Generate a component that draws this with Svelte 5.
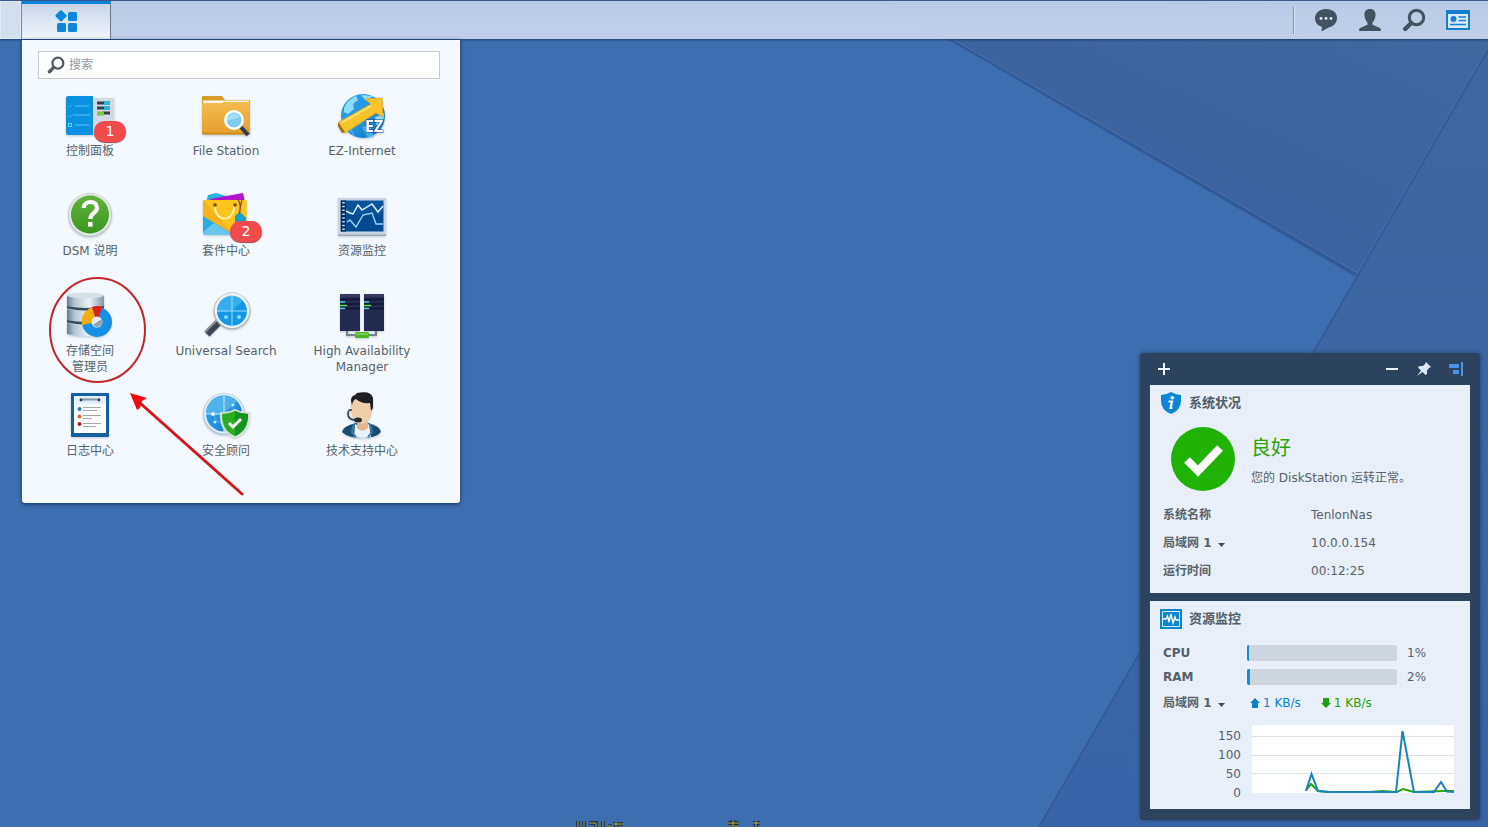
<script>
  const apps = [
    { id: 'panel', label: '控制面板', badge: 1 },
    { id: 'file', label: 'File Station' },
    { id: 'ez', label: 'EZ-Internet' },
    { id: 'help', label: 'DSM 说明' },
    { id: 'package', label: '套件中心', badge: 2 },
    { id: 'resource', label: '资源监控' },
    { id: 'storage', label: '存储空间\n管理员' },
    { id: 'search', label: 'Universal Search' },
    { id: 'ha', label: 'High Availability\nManager' },
    { id: 'log', label: '日志中心' },
    { id: 'security', label: '安全顾问' },
    { id: 'support', label: '技术支持中心' }
  ];
  const meters = [
    { name: 'CPU', value: 1 },
    { name: 'RAM', value: 2 }
  ];
  let query = $state('');
</script>

{#snippet magnifier(size)}
  <svg width={size} height={size} viewBox="0 0 24 24" fill="none" stroke="currentColor" aria-hidden="true">
    <circle cx="14.5" cy="9.5" r="7.2" stroke-width="3" />
    <path d="M9 15.2 3.2 21" stroke-width="4.4" stroke-linecap="round" />
  </svg>
{/snippet}

{#snippet appIcon(id)}
  <svg class="art" viewBox="0 0 48 48" aria-hidden="true">
    {#if id === 'panel'}
      <path d="M26 7h22v35q0 2-2 2H26z" fill="#d3dae1" />
      <path d="M2 5h25v39H2q-2 0-2-2V7q0-2 2-2z" fill="#0a92e2" />
      <path d="M9 15h14M7 24h17M9 34h14" stroke="#5fc0f2" />
      <path d="m2 15 1.500 1.500 3-3M2 25l1.500 1.500 3-3" fill="none" stroke="#44b1ee" />
      <rect x="2.500" y="32.500" width="3" height="3" fill="none" stroke="#5bd5ee" />
      <path d="M31 12h7M31 17h7M37 22h7" stroke="#353f4a" stroke-width="3" />
      <path d="M38 12h6M38 17h6" stroke="#31b4dc" stroke-width="4" />
      <path d="M31 22.500h7" stroke="#75cb37" stroke-width="4" />
    {:else if id === 'file'}
      <path d="M0 6q0-1 1-1h19l3 4h25v14H0z" fill="#d89b29" />
      <path d="M1 9.500h46v8H1z" fill="#fff8e6" />
      <path d="M0 13q0-1 1.500-1H19l3-1h25q1 0 1 1V42q0 1.500-1.500 1.500h-45Q0 43.500 0 42z" fill="url(#folder)" />
      <path d="M0 41.500h48v.500q0 1.500-1.500 1.500h-45Q0 43.500 0 42z" fill="#cf8d20" />
      <path d="m39 36 7 8" stroke="#29404f" stroke-width="4" />
      <circle cx="32" cy="29" r="8.700" fill="#7fcbf3" stroke="#fff" stroke-width="2.500" />
      <path d="M25 30a7 7 0 0 1 13-4z" fill="#a5def9" />
    {:else if id === 'ez'}
      <circle cx="25" cy="25" r="22" fill="url(#globe)" />
      <path d="M6 17q4-9 12-12l2 4-5 4 1 5-6 5-4-2zM23 4l12 1-7 5zM37 26q5-1 9-4 1 8-7 14z" fill="#8edbf5" />
      <path d="M8 34q7 4 9 12M24 36l8-2 4 12-6 1z" fill="#5cc3f0" opacity=".7" />
      <path d="M3 37 1 31 33 13l-6-5 17-1 1 19-7-4L7 42z" fill="#f9c32c" stroke="#e6a51a" stroke-width=".8" />
      <path d="m3 32 30-17" stroke="#ffe06b" stroke-width="2" />
      <path d="m0 31 7 10-3 1-4-7z" fill="#a96812" />
      <text x="27" y="41" class="ez-text">EZ</text>
    {:else if id === 'help'}
      <circle cx="24" cy="24" r="22" fill="#b8c4c0" />
      <circle cx="24" cy="23.500" r="21.300" fill="#dfe6e2" />
      <circle cx="24" cy="23.500" r="19" fill="url(#green)" />
      <path d="M17.500 17q1-6 7-6t6.500 6c0 5-6.700 5-6.700 11" fill="none" stroke="#fff" stroke-width="4.200" />
      <rect x="22" y="31" width="4.600" height="4.600" fill="#fff" />
    {:else if id === 'package'}
      <path d="m6 4 8-2 10 3v8H4z" fill="#23b4df" />
      <path d="m8 8 33-6 2 9H8z" fill="#b513c8" />
      <path d="M1 9h43l1 30q0 5-4 5H6q-5 0-5-5z" fill="#f7b21c" />
      <path d="M1 25 32 44H5q-4 0-4-4z" fill="#29abe4" />
      <path d="M1 41 12 32l20 12H5q-4 0-4-3z" fill="#69c7ef" />
      <path d="m1 9 26 29 18-13V9z" fill="#ffd21c" opacity=".6" />
      <path d="M13 14c-1 18 20 18 19 0" fill="none" stroke="#fff0a8" stroke-width="2" />
      <circle cx="13" cy="14" r="1.800" fill="#7a4700" /><circle cx="33" cy="14" r="1.800" fill="#7a4700" />
      <path d="m33 25 5-4 6 6-1 9H33z" fill="#15a1ca" />
      <path d="M36 8q4 8 1 15M40 8l-3 15" fill="none" stroke="#784b28" stroke-width="1.200" />
    {:else if id === 'resource'}
      <rect x="0" y="7" width="48" height="38" fill="#9eabb9" />
      <rect x="0" y="7" width="48" height="36.500" fill="#cbd5e1" />
      <rect x="2.500" y="9.500" width="43" height="31" fill="#07549c" />
      <path d="M9 24h36v16H9z" fill="#054a90" />
      <path d="M3 9.500h5v31H3z" fill="#082b5c" />
      <path d="M5.500 11v29" stroke="#c9d8e8" stroke-width="2.600" stroke-dasharray="1.500 2.300" />
      <path d="m8 20 4 2 3 1 5-9 4 5 10-6 6 8 5-6" fill="none" stroke="#e4f2ff" stroke-width="1.400" />
      <path d="m9 31 3-2 6 7 7-12 9-2 4 11h7" fill="none" stroke="#98d5fc" stroke-width="1.400" />
    {:else if id === 'storage'}
      <path d="M1 4h37v11q-18 4-37 0zM1 18q18 4 37 0v11q-18 4-37 0zM1 32q18 4 37 0v11q-18 5-37 0z" fill="url(#steel)" />
      <ellipse cx="19.500" cy="4.500" rx="18.500" ry="2.700" fill="#d5e0e8" />
      <path d="M1 15q18 4 37 0v2.500q-18 4-37 0zM1 29q18 4 37 0v2.500q-18 4-37 0z" fill="#354c5e" />
      <circle cx="31" cy="31" r="15" fill="#1590e5" />
      <path d="M31 31 16 34Q14 22 26 16z" fill="#f7ac0c" />
      <path d="m31 31-5-15q5-2 10 0z" fill="#da1e24" />
      <circle cx="31" cy="31" r="5.500" fill="#e4edf5" /><path d="m31 31 5-3q2 6-4 8-3 0-5-2z" fill="#8ea3b4" />
    {:else if id === 'search'}
      <path d="m5 43 14-14" stroke="#3c4650" stroke-width="7" />
      <path d="m3 41 13-13" stroke="#8a949d" stroke-width="2" />
      <circle cx="30" cy="20" r="18.500" fill="#a6b4bf" /><circle cx="30" cy="19.500" r="17.500" fill="#edf2f6" />
      <circle cx="30" cy="20" r="15" fill="#1398e8" />
      <path d="M30 20 41 9.500A15 15 0 0 0 15 21z" fill="#45b7f2" opacity=".7" />
      <path d="M15 20h30M30 5v30" stroke="#a7e5ff" stroke-width=".9" />
      <circle cx="24" cy="26" r="2" fill="#84ddff" /><circle cx="37" cy="26" r="2" fill="#84ddff" />
    {:else if id === 'ha'}
      <path d="M9 38v6h29v-6" fill="none" stroke="#73828a" stroke-width="2" />
      <path d="M2 3h20v37H2zM26 3h20v37H26z" fill="#222a51" />
      <path d="M2 3h20v3H2zM26 3h20v3H26z" fill="#353a63" />
      <path d="M2 8.500h20M2 13h20M2 17.500h20M26 8.500h20M26 13h20M26 17.500h20" stroke="#10152d" stroke-width="1.500" />
      <path d="M2 11h5M26 11h5M2 17.500h5M26 17.500h5" stroke="#4cc6df" stroke-width="1.600" />
      <path d="M2 14.500h7M26 14.500h7" stroke="#62db45" stroke-width="1.600" />
      <rect x="17" y="41" width="14" height="6" rx="1.500" fill="#4db424" />
      <path d="M18 43h12" stroke="#9ae970" />
    {:else if id === 'log'}
      <rect x="5" y="2" width="38" height="44" rx="1" fill="#14609f" />
      <rect x="8" y="5" width="32" height="37" fill="#fff" />
      <path d="M9 5h30v8H9z" fill="#e1eefb" />
      <path d="M15 8.500h18" stroke="#8795a3" stroke-width="2" />
      <circle cx="15" cy="9" r="1.400" fill="#263744" /><circle cx="33" cy="9" r="1.400" fill="#263744" />
      <path d="M17 16.500h18M17 19.500h14M17 24.500h18M17 27.500h9M17 32.500h18M17 35.500h13" stroke="#a0a7ad" />
      <circle cx="13.500" cy="18" r="2" fill="#2277b3" /><circle cx="13.500" cy="25.500" r="2" fill="#e46132" /><circle cx="13.500" cy="33" r="2" fill="#a42422" />
    {:else if id === 'security'}
      <circle cx="22" cy="23" r="21" fill="#b4c5d4" /><circle cx="22" cy="22.500" r="20" fill="#e0edf5" />
      <circle cx="22" cy="22.500" r="18" fill="url(#globe)" />
      <path d="M22 22.500 35 10A18 18 0 0 0 4 23z" fill="#79c8f4" opacity=".5" />
      <path d="M4 23h36M22 5v36" stroke="#c8f2ff" /><circle cx="22" cy="22.500" r="10" fill="none" stroke="#61b8ed" stroke-width=".7" />
      <circle cx="11" cy="23" r="2" fill="#e1fbff" /><circle cx="13" cy="31" r="1.500" fill="#c8f5ff" /><circle cx="31" cy="14" r="1.500" fill="#c8f5ff" />
      <path d="M33 18q7 4 15 3c1 14-4 22-15 26-11-4-16-12-15-26q8 1 15-3z" fill="#d3e2d6" />
      <path d="M33 20q6 3 13 3c0 12-4 18-13 22-9-4-13-10-13-22q7 0 13-3z" fill="#28ad25" />
      <path d="M33 20q6 3 13 3c0 12-4 18-13 22z" fill="#149320" />
      <path d="m27 32 4 4 8-8" fill="none" stroke="#fff" stroke-width="3" />
    {:else}
      <path d="M4 41q1-6 14-9h12q12 3 13 9-5 6-19 6T4 41z" fill="#174c75" />
      <path d="m17 33 7 4 7-4 2 13q-9 2-17 0z" fill="#e8f1f8" />
      <path d="m16 33-2 8 4 5M32 33l2 8-4 5" fill="none" stroke="#427ca4" stroke-width="2" />
      <path d="M19 28h11v9q-6 5-11 0z" fill="#e6b58e" />
      <path d="M13 12q0-8 10-8 11 0 11 12 0 15-10 17-11-2-11-18z" fill="#f1ceaa" />
      <path d="M14 14q-3-8 3-10l2-2q14-3 16 5v10l-2 3-1-8q-9 1-14-4-3 1-4 6z" fill="#201f25" />
      <path d="M14 19q-4-1-4 4 0 6 8 6" fill="none" stroke="#3c454c" stroke-width="1.700" />
      <ellipse cx="20" cy="29" rx="4" ry="2.500" fill="#252b2f" />
    {/if}
  </svg>
{/snippet}

{#snippet network()}
  <span class="pick">
    <select aria-label="网络接口"><option>局域网 1</option></select>
    <svg width="7" height="4" viewBox="0 0 7 4" aria-hidden="true"><path d="M0 0h7L3.500 4z" fill="#424d57" /></svg>
  </span>
{/snippet}

<div class="desktop">
  <svg class="wallpaper" viewBox="0 0 1488 827" preserveAspectRatio="xMaxYMin slice" aria-hidden="true">
    <defs>
      <linearGradient id="facet" x1="0" y1=".8" x2=".8" y2="0"><stop stop-color="#3a60a0" /><stop offset="1" stop-color="#3e699f" /></linearGradient>
      <linearGradient id="side" x1="0" y1="0" x2="0" y2="1"><stop stop-color="#3d689f" /><stop offset="1" stop-color="#3965a8" /></linearGradient>
      <linearGradient id="folder" x1="0" y1="0" x2="0" y2="1"><stop stop-color="#f3bc50" /><stop offset="1" stop-color="#e49f2d" /></linearGradient>
      <linearGradient id="globe" x1="0" y1="0" x2="1" y2="1"><stop stop-color="#2ba5e4" /><stop offset=".5" stop-color="#2395df" /><stop offset="1" stop-color="#0870c7" /></linearGradient>
      <linearGradient id="green" x1="0" y1="0" x2="0" y2="1"><stop stop-color="#61b23a" /><stop offset="1" stop-color="#3b9722" /></linearGradient>
      <linearGradient id="steel"><stop stop-color="#657f92" /><stop offset=".2" stop-color="#b4c5d1" /><stop offset=".6" stop-color="#edf3f7" /><stop offset="1" stop-color="#8197a7" /></linearGradient>
    </defs>
    <rect width="1488" height="827" fill="#3d6eaf" />
    <path d="M885 0h603v50l-130 223z" fill="url(#facet)" />
    <path d="M1488 50v777h-449l319-554z" fill="url(#side)" />
    <path d="m885 0 473 273-2 4L880 0z" fill="#315a98" />
    <path d="m885 0 473 273" stroke="#4874ad" />
    <path d="m1488 50-130 225-319 552" fill="none" stroke="#325c9b" stroke-width="2" />
    <path d="m1486 50-130 225-319 552" fill="none" stroke="#4270ad" />
  </svg>

  <header class="taskbar">
    <span class="edge"></span>
    <button class="launcher" aria-label="主菜单">
      <svg width="24" height="24" viewBox="0 0 24 24" fill="#0c86dc" aria-hidden="true">
        <rect x="2.700" y="2.500" width="8.600" height="8.600" rx="1" transform="rotate(45 7 6.800)" />
        <rect x="14" y="3" width="9" height="9" rx="1.500" /><rect x="3" y="14" width="9" height="9" rx="1.500" /><rect x="14" y="14" width="9" height="9" rx="1.500" />
      </svg>
    </button>
    <nav class="tray" aria-label="系统">
      <button aria-label="通知">
        <svg width="24" height="24" viewBox="0 0 24 24" aria-hidden="true"><path d="M12 1c6.500 0 11 3.700 11 9s-4 8.600-8.500 9.500L7.500 23.500 8 19C3.500 17.500 1 14.500 1 10.500 1 5 5.500 1 12 1z" fill="currentColor" /><circle cx="7" cy="10.500" r="1.400" fill="#e3ebf6" /><circle cx="12" cy="10.500" r="1.400" fill="#e3ebf6" /><circle cx="17" cy="10.500" r="1.400" fill="#e3ebf6" /></svg>
      </button>
      <button aria-label="用户">
        <svg width="24" height="24" viewBox="0 0 24 24" aria-hidden="true"><path d="M12 1c4 0 6 2.500 5.500 6.500-.3 3-1.500 5.500-3 7v2.200L22 20q1 .5 1 3H1q0-2.500 1-3l7.500-3.300v-2.200c-1.500-1.500-2.700-4-3-7C6 3.500 8 1 12 1z" fill="currentColor" /></svg>
      </button>
      <button aria-label="搜索">{@render magnifier(24)}</button>
      <button class="on" aria-label="小组件">
        <svg width="24" height="24" viewBox="0 0 24 24" aria-hidden="true"><path d="M0 2h24v20H0z" fill="currentColor" /><path d="M2 6h20v14H2z" fill="#d9e9f8" /><circle cx="7.500" cy="11" r="3" fill="currentColor" /><path d="M12.500 9H20M12.500 12.500H20M4 16.500h16" stroke="currentColor" stroke-width="1.600" /></svg>
      </button>
    </nav>
  </header>

  <main class="menu">
    <label class="search">
      {@render magnifier(18)}
      <input type="text" placeholder="搜索" aria-label="搜索" bind:value={query} />
    </label>
    <div class="apps">
      {#each apps as app (app.id)}
        <button class="app">
          <span class="icon">
            {@render appIcon(app.id)}
            {#if app.badge}<span class="badge">{app.badge}</span>{/if}
          </span>
          <span class="label">{app.label}</span>
        </button>
      {/each}
    </div>
    <svg class="pointer" width="204" height="230" viewBox="0 0 204 230" fill="none" aria-hidden="true">
      <ellipse cx="55.500" cy="60" rx="47.500" ry="52" stroke="#c5242b" stroke-width="2" />
      <path d="m98 133 102 91" stroke="#d9151b" stroke-width="3" stroke-linecap="round" />
      <path d="m88 123 17 5-5 3-2 7-3 2z" fill="#f0090e" />
    </svg>
  </main>

  <aside class="widgets">
    <div class="tools">
      <button aria-label="添加"><svg width="16" height="16" viewBox="0 0 16 16" aria-hidden="true"><path d="M8 2v12M2 8h12" stroke="#e9f1fa" stroke-width="2" /></svg></button>
      <button class="push" aria-label="最小化"><svg width="16" height="16" viewBox="0 0 16 16" aria-hidden="true"><path d="M2 8h12" stroke="#e9f1fa" stroke-width="2" /></svg></button>
      <button aria-label="固定"><svg width="16" height="16" viewBox="0 0 16 16" aria-hidden="true"><path d="m10 1 5 5-2 1-2 2.500V13l-1.500 1L6.500 11 1 15l4-5.500L2 6.500 3.500 5H7l2-2z" fill="#dce8f5" /></svg></button>
      <button aria-label="靠右"><svg width="16" height="16" viewBox="0 0 16 16" aria-hidden="true"><path d="M1 3h10v4H1zM5 9h6v4H5zM13 1h2v14h-2z" fill="#4b94e5" /></svg></button>
    </div>

    <section class="card">
      <h2>
        <svg width="22" height="22" viewBox="0 0 22 22" aria-hidden="true"><path d="M11 0q5 3 10 3v6q0 9-10 13Q1 18 1 9V3q5 0 10-3z" fill="#0b86d7" /><circle cx="12.300" cy="5.700" r="1.800" fill="#fff" /><path d="M8.500 9.500h3.500l-1.500 6.500h2" fill="none" stroke="#fff" stroke-width="2.200" /></svg>
        系统状况
      </h2>
      <div class="health">
        <svg width="64" height="64" viewBox="0 0 64 64" aria-hidden="true"><circle cx="32" cy="32" r="32" fill="#20b305" /><path d="m16 33 11 11 22-23" fill="none" stroke="#fff" stroke-width="8" /></svg>
        <div><strong>良好</strong><p>您的 DiskStation 运转正常。</p></div>
      </div>
      <table>
        <tbody>
          <tr><th scope="row">系统名称</th><td>TenlonNas</td></tr>
          <tr><th scope="row">{@render network()}</th><td>10.0.0.154</td></tr>
          <tr><th scope="row">运行时间</th><td>00:12:25</td></tr>
        </tbody>
      </table>
    </section>

    <section class="card">
      <h2>
        <svg width="22" height="22" viewBox="0 0 22 22" aria-hidden="true"><path d="M0 1h22v20H0z" fill="#0b86d0" /><path d="M2.500 3.500h17v15h-17z" fill="none" stroke="#d6edfa" /><path d="M3 11h3l1.500-3L9 14l2-8 2 9 2-6 1 3h3" fill="none" stroke="#fff" stroke-width="1.400" /></svg>
        资源监控
      </h2>
      <div class="usage">
        {#each meters as m (m.name)}
          <div class="row">
            <b>{m.name}</b>
            <div class="meter" role="meter" aria-label={m.name} aria-valuenow={m.value} aria-valuemin="0" aria-valuemax="100"><i style="width:{m.value}%"></i></div>
            <span>{m.value}%</span>
          </div>
        {/each}
        <div class="row net">
          <div>{@render network()}</div>
          <div class="rates">
            <span class="up"><svg width="10" height="10" viewBox="0 0 10 10" aria-hidden="true"><path d="m5 0 5 5H8v5H2V5H0z" fill="currentColor" /></svg>1 KB/s</span>
            <span class="down"><svg width="10" height="10" viewBox="0 0 10 10" aria-hidden="true"><path d="m5 10 5-5H8V0H2v5H0z" fill="currentColor" /></svg>1 KB/s</span>
          </div>
        </div>
        <div class="chart">
          <div class="axis"><span>150</span><span>100</span><span>50</span><span>0</span></div>
          <svg viewBox="0 0 202 68" preserveAspectRatio="none" role="img" aria-label="网络流量">
            <path d="M0 0h202v68H0z" fill="#fff" />
            <path d="M0 11.500h202M0 30.500h202M0 48.500h202" stroke="#dfe2e5" />
            <path d="m54 65 5-6 7 7 10 1h42l12-1 15 1 6-3 11 3 30-1h10" fill="none" stroke="#25a40d" stroke-width="2" />
            <path d="m54 66 5.500-17 6.500 17 12 1h66l6.500-61 11.500 61h20l7-10 6 9.500 7 .500" fill="none" stroke="#1a82bb" stroke-width="2" />
          </svg>
        </div>
      </div>
    </section>
  </aside>

  <svg class="marks" width="186" height="7" viewBox="0 0 186 7" fill="none" aria-hidden="true">
    <path d="M2 1v6M8 1v6M13 3h7v4M27 1v6M32 6h4M40 2v5M37 4h10M152 3h11M157 0v5M154 6h8M177 3h7M180 1v6" stroke="#132a30" stroke-width="3.500" />
    <path d="M2 1v6M8 1v6M13 3h7v4M27 1v6M32 6h4M40 2v5M37 4h10M152 3h11M157 0v5M154 6h8M177 3h7M180 1v6" stroke="#b7b95b" />
  </svg>
</div>

<style>
  :global(body) { margin: 0; }
  .desktop {
    position: relative; min-height: 100vh; overflow: hidden; box-sizing: border-box;
    background: #3d6eaf; color: #56616c;
    font: 12px/16px "DejaVu Sans", "Noto Sans CJK SC", sans-serif;
  }
  .desktop :is(button, input, select) { font: inherit; color: inherit; border: 0; background: none; padding: 0; margin: 0; }
  svg { display: block; flex: none; }
  .wallpaper { position: absolute; inset: 0; width: 100%; height: 100%; }

  .taskbar {
    position: relative; display: flex; height: 39px; box-sizing: border-box;
    border-top: 1px solid #3b578c; background: linear-gradient(#c0d0e9f2, #c8d4eaf2);
    box-shadow: 0 1px 2px #1d3d6b;
  }
  .edge { width: 21px; background: #d3dfef; box-shadow: inset 0 0 0 1px #e1ebf7; border-right: 1px solid #7189ad; }
  .desktop .launcher {
    display: grid; place-items: center; width: 89px; box-sizing: border-box; padding-bottom: 2px;
    border-top: 3px solid #0b83d9; border-right: 1px solid #68788f;
    background: linear-gradient(#c9d5e7, #f1f6fd);
  }
  .tray { display: flex; align-items: center; margin-left: auto; padding-right: 8px; color: #43525f; }
  .tray::before { content: ""; width: 1px; height: 27px; margin-right: 10px; background: #7f91ad; box-shadow: 1px 0 #dce7f5; }
  .tray button { display: grid; place-items: center; width: 44px; height: 38px; }
  .tray .on { color: #147fd0; }

  .menu {
    position: absolute; top: 40px; left: 22px; width: 438px; height: 463px; box-sizing: border-box;
    padding-top: 11px; border-radius: 0 0 3px 3px; background: #f4f9ff; box-shadow: 0 1px 4px #14305c;
  }
  .search {
    display: flex; align-items: center; gap: 4px; height: 28px; box-sizing: border-box; margin: 0 20px 0 16px;
    padding-left: 8px; border: 1px solid #c5cbd1; background: #fff; color: #4f5860;
  }
  .search input { flex: 1; min-width: 0; outline: 0; }
  .search input::placeholder { color: #929aa1; opacity: 1; }
  .apps { display: grid; grid-template-columns: repeat(3, 136px); grid-auto-rows: 100px; margin-top: 12px; }
  .app { display: flex; flex-direction: column; align-items: center; gap: 4px; }
  .icon { position: relative; width: 48px; height: 48px; }
  .art { width: 48px; height: 48px; overflow: visible; filter: drop-shadow(0 1px 1px #33445544); }
  .ez-text { font: bold 16px "Open Sans", sans-serif; fill: #fff; stroke: #174a8e; stroke-width: 1px; paint-order: stroke; }
  .badge {
    position: absolute; left: 28px; top: 30px; width: 32px; height: 21px; border-radius: 11px;
    background: #f24b4b; color: #fff; font-size: 14px; line-height: 20px; box-shadow: 0 1px 1px #9b4147;
  }
  .label { white-space: pre-line; text-align: center; }
  .pointer { position: absolute; left: 20px; top: 230px; pointer-events: none; }

  .widgets {
    position: absolute; right: 8px; bottom: 7px; width: 340px; box-sizing: border-box; padding: 0 10px 11px;
    border-radius: 3px; background: #2d405af0; box-shadow: 0 0 4px #243f6b;
  }
  .tools { display: flex; align-items: center; gap: 16px; height: 32px; padding: 0 6px; }
  .tools .push { margin-left: auto; }
  .card { height: 208px; background: #e9eff8; box-sizing: border-box; }
  .card + .card { margin-top: 8px; }
  h2 { display: flex; align-items: center; gap: 7px; height: 36px; margin: 0; padding-left: 10px; font-size: 13px; color: #505c68; }
  .health { display: flex; gap: 16px; padding: 6px 0 0 21px; height: 74px; }
  .health strong { display: block; margin-top: 7px; font-size: 20px; line-height: 28px; font-weight: 400; color: #2fa30f; }
  .health p { margin: 8px 0 0; white-space: nowrap; }
  table { border-spacing: 0; width: 100%; table-layout: fixed; }
  th { width: 148px; padding: 0 0 0 13px; text-align: left; }
  td { padding: 0; }
  tr { height: 28px; }
  .pick { display: inline-grid; align-items: center; font-weight: 700; vertical-align: middle; }
  .pick > * { grid-area: 1 / 1; }
  .pick svg { justify-self: end; margin-top: 3px; }
  .desktop .pick select { appearance: none; padding-right: 13px; }

  .usage { padding: 4px 16px 0 13px; }
  .row { display: grid; grid-template-columns: 84px 150px 1fr; align-items: center; height: 24px; }
  .row > span { padding-left: 10px; }
  .meter { height: 16px; border-radius: 2px; background: #cdd5df; overflow: hidden; }
  .meter i { display: block; height: 100%; min-width: 2px; background: #2088cc; }
  .net { grid-template-columns: 87px 1fr; height: 28px; }
  .rates { display: flex; gap: 20px; }
  .rates span { display: flex; align-items: center; gap: 3px; }
  .up { color: #0e7fcb; }
  .down { color: #21a013; }
  .chart { display: flex; gap: 11px; margin-top: 8px; }
  .axis { width: 78px; text-align: right; line-height: 19px; padding-top: 2px; }
  .axis span { display: block; }
  .chart svg { flex: 1; min-width: 0; height: 68px; }
  .marks { position: absolute; left: 576px; bottom: 0; }
</style>
